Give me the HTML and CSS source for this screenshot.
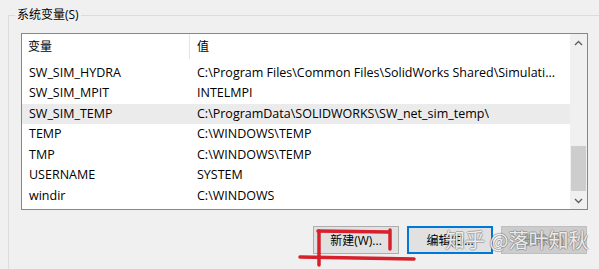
FILE: index.html
```html
<!DOCTYPE html>
<html lang="zh-CN">

<head>
    <meta charset="UTF-8">
    <title>系统变量</title>
    <link rel="stylesheet" href="styles.css">
</head>

<body>
    <fieldset class="group">
        <legend>系统变量(S)</legend>

        <div class="listbox">
            <div class="list">
                <div class="head">
                    <div class="c1">变量</div>
                    <div class="c2">值</div>
                </div>
                <div class="rows">
                    <div class="row"><div class="c1">SW_SIM_HYDRA</div><div class="c2">C:\Program Files\Common Files\SolidWorks Shared\Simulati...</div></div>
                    <div class="row"><div class="c1">SW_SIM_MPIT</div><div class="c2">INTELMPI</div></div>
                    <div class="row valgt"><div class="c1">SW_SIM_TEMP</div><div class="c2">C:\ProgramData\SOLIDWORKS\SW_net_sim_temp\</div></div>
                    <div class="row"><div class="c1">TEMP</div><div class="c2">C:\WINDOWS\TEMP</div></div>
                    <div class="row"><div class="c1">TMP</div><div class="c2">C:\WINDOWS\TEMP</div></div>
                    <div class="row"><div class="c1">USERNAME</div><div class="c2">SYSTEM</div></div>
                    <div class="row"><div class="c1">windir</div><div class="c2">C:\WINDOWS</div></div>
                </div>
            </div>

            <div class="scrollbar">
                <div class="arrow">
                    <svg width="9" height="6" viewBox="0 0 9 6"><path d="M1 5 L4.5 1.5 L8 5" fill="none" stroke="#606060" stroke-width="1.4"/></svg>
                </div>
                <div class="track"><div class="thumb"></div></div>
                <div class="arrow">
                    <svg width="9" height="6" viewBox="0 0 9 6"><path d="M1 1 L4.5 4.5 L8 1" fill="none" stroke="#606060" stroke-width="1.4"/></svg>
                </div>
            </div>
        </div>

        <div class="buttons">
            <button class="knap">新建(W)...</button>
            <button class="knap fokus">编辑(E)...</button>
            <button class="knap" disabled>删除(D)</button>

            <!-- red pen marks drawn over the screenshot -->
            <svg class="marks" width="130" height="45" viewBox="0 0 130 45">
                <path d="M20 4 L91 5" stroke="#d6202b" stroke-width="3.5" fill="none" stroke-linecap="round"/>
                <path d="M21 4 L21 38" stroke="#d6202b" stroke-width="3.5" fill="none" stroke-linecap="round"/>
                <path d="M92 3 L92 22" stroke="#d6202b" stroke-width="3.5" fill="none" stroke-linecap="round"/>
                <path d="M2 30 L116 32" stroke="#d6202b" stroke-width="3.5" fill="none" stroke-linecap="round"/>
            </svg>
            <div class="watermark">知乎 @落叶知秋</div>
        </div>
    </fieldset>
</body>

</html>
```

FILE: styles.css
```css
body {
    margin: 0;
    background-color: #f0f0f0;
    font-family: "Open Sans", "Noto Sans CJK SC", sans-serif;
    font-size: 12.5px;
    color: #000;
    overflow: hidden;
}

.group {
    box-sizing: border-box;
    height: calc(100vh - 7px);
    margin: 7px 0 0 8px;
    padding: 0;
    border: 1px solid #dcdcdc;
    border-right: none;
    border-bottom: none;
}

.group legend {
    margin-left: 6px;
    padding: 0 2px;
    line-height: 16px;
    font-size: 12px;
}

.listbox {
    margin: 10px 0 0 12px;
    width: 565px;
    height: 175px;
    border: 1px solid #828790;
    background-color: #fff;
    display: flex;
}

.list {
    flex: 1;
    overflow: hidden;
}

.head {
    display: flex;
    height: 25px;
    line-height: 25px;
    font-size: 12px;
}

.head .c1 {
    border-right: 1px solid #e5e5e5;
}

.rows {
    padding-top: 3.5px;
}

.row {
    display: flex;
    height: 20.6px;
    line-height: 20.6px;
    white-space: nowrap;
}

.row.valgt {
    background-color: #ebebeb;
}

.c1 {
    width: 161px;
    padding-left: 6px;
    flex-shrink: 0;
}

.c2 {
    padding-left: 7px;
    overflow: hidden;
}

.row .c1 {
    padding-left: 7px;
    width: 161px;
}

.scrollbar {
    width: 17px;
    display: flex;
    flex-direction: column;
    background-color: #f0f0f0;
}

.arrow {
    height: 17px;
    display: flex;
    align-items: center;
    justify-content: center;
}

.track {
    flex: 1;
    display: flex;
    flex-direction: column;
    justify-content: flex-end;
    padding-bottom: 1px;
}

.thumb {
    height: 45px;
    margin: 0 1px;
    background-color: #cdcdcd;
}

.buttons {
    position: relative;
    margin: 16px 0 0 304px;
    display: flex;
    gap: 8px;
}

.knap {
    width: 86px;
    height: 28px;
    padding: 0;
    border: 1px solid #adadad;
    background-color: #e1e1e1;
    font-family: "Open Sans", "Noto Sans CJK SC", sans-serif;
    font-size: 12px;
    color: #000;
}

.knap.fokus {
    border: 2px solid #0078d7;
}

.knap:disabled {
    background-color: #cccccc;
    border-color: #bfbfbf;
    color: #838383;
}

.marks {
    position: absolute;
    left: -15px;
    top: 1px;
}

.watermark {
    position: absolute;
    left: 132px;
    top: 0;
    font-family: "Noto Sans CJK SC", sans-serif;
    font-size: 20px;
    line-height: 28px;
    color: rgba(255, 255, 255, 0.85);
    text-shadow: 1px 0 0 rgba(110, 110, 110, 0.45), -1px 0 0 rgba(110, 110, 110, 0.45), 0 1px 0 rgba(110, 110, 110, 0.45), 0 -1px 0 rgba(110, 110, 110, 0.45);
    white-space: nowrap;
}
```
